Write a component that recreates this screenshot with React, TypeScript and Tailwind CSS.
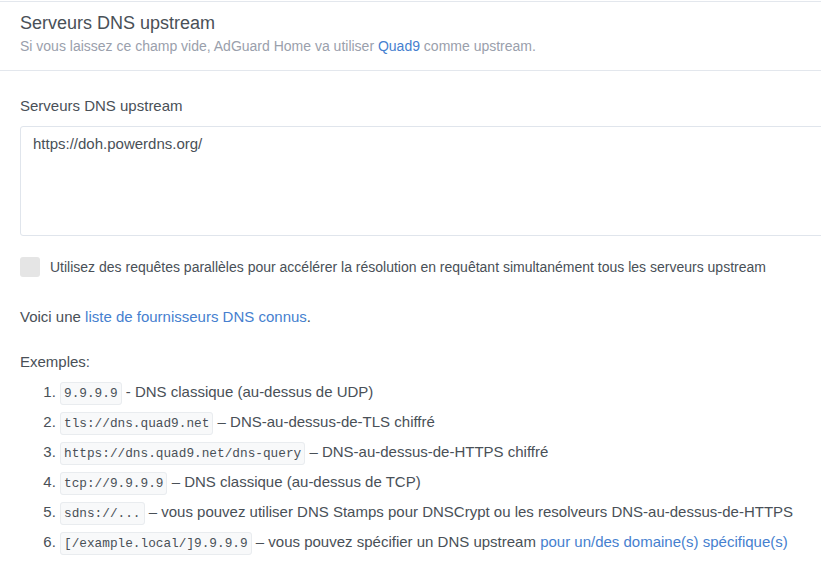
const examples: { code: string; text: string; link?: string; sep: string }[] = [
  { code: '9.9.9.9', sep: '-', text: 'DNS classique (au-dessus de UDP)' },
  { code: 'tls://dns.quad9.net', sep: '–', text: 'DNS-au-dessus-de-TLS chiffré' },
  { code: 'https://dns.quad9.net/dns-query', sep: '–', text: 'DNS-au-dessus-de-HTTPS chiffré' },
  { code: 'tcp://9.9.9.9', sep: '–', text: 'DNS classique (au-dessus de TCP)' },
  {
    code: 'sdns://...',
    sep: '–',
    text: 'vous pouvez utiliser DNS Stamps pour DNSCrypt ou les resolveurs DNS-au-dessus-de-HTTPS',
  },
  {
    code: '[/example.local/]9.9.9.9',
    sep: '–',
    text: 'vous pouvez spécifier un DNS upstream ',
    link: 'pour un/des domaine(s) spécifique(s)',
  },
];

export default function App() {
  return (
    <div
      className="h-[568px] w-full overflow-hidden bg-white text-[15px] text-[#495057]"
      style={{ fontFamily: '"Liberation Sans", Arial, sans-serif' }}
    >
      <div className="mt-[1px] border-t border-[#e3e7ed]">
        {/* header */}
        <div className="border-b border-[#e3e7ed] px-5 pt-[10px] pb-[13px]">
          <h2 className="text-[18px] leading-[22px] font-normal text-[#495057]">Serveurs DNS upstream</h2>
          <p className="mt-[2px] text-[14px] leading-[21px] text-[#9aa0ac]">
            Si vous laissez ce champ vide, AdGuard Home va utiliser{' '}
            <a className="text-[#467fcf]">Quad9</a> comme upstream.
          </p>
        </div>

        {/* body */}
        <div className="pl-5 pt-6">
          <label className="block leading-[21px]">Serveurs DNS upstream</label>
          <div className="mt-[10px] h-[110px] w-[840px] rounded-[3px] border border-[#e0e5ec] px-3 pt-[6px] leading-[21px]">
            https://doh.powerdns.org/
          </div>

          <div className="mt-[21px] flex h-5 items-center gap-[10px]">
            <span className="h-5 w-5 rounded-[3px] bg-[#e5e5e5]" />
            <span className="text-[14px] leading-[21px]">
              Utilisez des requêtes parallèles pour accélérer la résolution en requêtant simultanément tous les serveurs upstream
            </span>
          </div>

          <p className="mt-[29px] leading-[21px]">
            Voici une <a className="text-[#467fcf]">liste de fournisseurs DNS connus</a>.
          </p>

          <p className="mt-[24px] leading-[21px]">Exemples:</p>

          <ol className="mt-[5px] list-decimal pl-10">
            {examples.map((e) => (
              <li key={e.code} className="h-[30px] leading-[30px]">
                <code
                  className="rounded-[3px] border border-[#e9ecef] bg-[#f8f9fa] px-[3px] py-[3px] text-[12.75px]"
                  style={{ fontFamily: '"Liberation Mono", "Courier New", monospace' }}
                >
                  {e.code}
                </code>{' '}
                {e.sep} {e.text}
                {e.link && <a className="text-[#467fcf]">{e.link}</a>}
              </li>
            ))}
          </ol>
        </div>
      </div>
    </div>
  );
}
